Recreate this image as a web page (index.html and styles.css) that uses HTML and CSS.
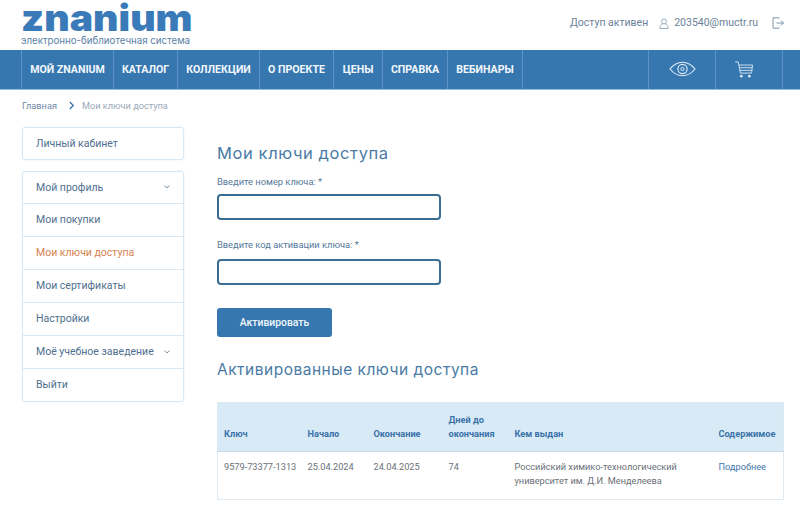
FILE: index.html
```html
<!DOCTYPE html>
<html lang="ru">
<head>
<meta charset="utf-8">
<title>Мои ключи доступа</title>
<link rel="stylesheet" href="styles.css">
</head>
<body>
<header class="top">
  <div class="logo">
    <div class="logo-word">znanium</div>
    <div class="logo-sub">электронно-библиотечная система</div>
  </div>
  <div class="user">
    <span>Доступ активен</span>
    <span class="user-mail">
      <svg class="ico-user" viewBox="0 0 12 13" width="10" height="11"><circle cx="6" cy="4" r="3" fill="none" stroke="#8aa0b8"/><path d="M1 12.5c0-4 2-5.500 3.500-5.500M11 12.500c0-4-2-5.500-3.500-5.500M1 12.500h10" fill="none" stroke="#8aa0b8"/></svg>
      203540@muctr.ru
    </span>
    <svg class="ico-exit" viewBox="0 0 12 12" width="12" height="12"><path d="M7 1.500V.8H1v10.400h6v-.7M4.500 6h7M9 3.500 11.500 6 9 8.500" fill="none" stroke="#8094ac"/></svg>
  </div>
</header>
<nav class="nav">
  <a class="nav-item w1">МОЙ ZNANIUM</a>
  <a class="nav-item w2">КАТАЛОГ</a>
  <a class="nav-item w3">КОЛЛЕКЦИИ</a>
  <a class="nav-item w4">О ПРОЕКТЕ</a>
  <a class="nav-item w5">ЦЕНЫ</a>
  <a class="nav-item w6">СПРАВКА</a>
  <a class="nav-item w7">ВЕБИНАРЫ</a>
  <span class="nav-fill"></span>
  <a class="nav-item w8">
    <svg viewBox="0 0 28 16" width="27" height="16"><path d="M1 8C5 3 9 1 14 1s9 2 13 7c-4 5-8 7-13 7S5 13 1 8Z" fill="none" stroke="#dcebf7" stroke-width="1.200"/><circle cx="14" cy="8" r="4.800" fill="none" stroke="#dcebf7" stroke-width="1.200"/><circle cx="14" cy="8" r="1.700" fill="none" stroke="#dcebf7"/></svg>
  </a>
  <a class="nav-item w9">
    <svg viewBox="0 0 22 19" width="20" height="17"><path d="M1 1h3.500l2.500 12.500h12M5.500 4.500H20.500M6 7.500h14M6.500 10.500h13M20.500 4.500l-1 9" fill="none" stroke="#dcebf7"/><circle cx="8" cy="17" r="1.500" fill="#dcebf7"/><circle cx="17" cy="17" r="1.500" fill="#dcebf7"/></svg>
  </a>
</nav>
<div class="crumbs">
  <span>Главная</span>
  <svg class="crumb-sep" viewBox="0 0 7 10" width="6" height="9"><path d="M1 1l4 4-4 4" fill="none" stroke="#3a72a8" stroke-width="1.500"/></svg>
  <span class="crumb-now">Мои ключи доступа</span>
</div>
<div class="page">
  <aside class="side">
    <ul class="card">
      <li class="item">Личный кабинет</li>
    </ul>
    <ul class="card">
      <li class="item">Мой профиль<svg class="chev" viewBox="0 0 7 4" width="6" height="4"><path d="M.5.500l3 2.500 3-2.500" fill="none" stroke="#5f7f9f"/></svg></li>
      <li class="item">Мои покупки</li>
      <li class="item active">Мои ключи доступа</li>
      <li class="item">Мои сертификаты</li>
      <li class="item">Настройки</li>
      <li class="item">Моё учебное заведение<svg class="chev" viewBox="0 0 7 4" width="6" height="4"><path d="M.5.500l3 2.500 3-2.500" fill="none" stroke="#5f7f9f"/></svg></li>
      <li class="item">Выйти</li>
    </ul>
  </aside>
  <main class="main">
    <h1 class="title">Мои ключи доступа</h1>
    <label class="label">Введите номер ключа: *</label>
    <input class="field" type="text">
    <label class="label label-2">Введите код активации ключа: *</label>
    <input class="field" type="text">
    <button class="btn" type="button">Активировать</button>
    <h2 class="title title-2">Активированные ключи доступа</h2>
    <table class="keys">
      <colgroup>
        <col class="c1"><col class="c2"><col class="c3"><col class="c4"><col class="c5"><col class="c6">
      </colgroup>
      <thead>
        <tr><th>Ключ</th><th>Начало</th><th>Окончание</th><th>Дней до окончания</th><th>Кем выдан</th><th>Содержимое</th></tr>
      </thead>
      <tbody>
        <tr><td>9579-73377-1313</td><td>25.04.2024</td><td>24.04.2025</td><td>74</td><td>Российский химико-технологический университет им. Д.И. Менделеева</td><td><a class="more">Подробнее</a></td></tr>
      </tbody>
    </table>
  </main>
</div>
</body>
</html>
```
FILE: styles.css
```css
* { box-sizing: border-box; }
html, body { margin: 0; height: 505px; overflow: hidden; }
body { background: #fff; font-family: Roboto, "Liberation Sans", sans-serif; color: #4f6f8f; }

.top { height: 50px; padding: 0 16px 0 21px; display: flex; justify-content: space-between; align-items: flex-start; }
.logo { width: 175px; }
.logo-word { font-family: Inter, sans-serif; font-weight: 900; font-size: 36px; line-height: 35px; color: #3a7ab8; height: 35px; margin-top: 1px; transform: scaleX(1.09); transform-origin: left center; white-space: nowrap; }
.logo-sub { font-family: Inter, sans-serif; font-size: 9.700px; line-height: 9px; color: #5a82a6; white-space: nowrap; }
.user { display: flex; align-items: center; font-size: 10.500px; color: #6b8199; margin-top: 16px; line-height: 14px; }
.user-mail { display: flex; align-items: center; gap: 5px; margin-left: 11px; }
.ico-exit { margin-left: 14px; }

.nav { height: 40px; background: #3777b0; border-bottom: 1px solid #8fbbe0; padding-left: 21px; display: flex; }
.nav-item { display: flex; align-items: center; justify-content: center; border-left: 1px solid #5c93c4; color: #f2f7fb; font-weight: 700; font-size: 10.600px; white-space: nowrap; }
.w1 { width: 92px; } .w2 { width: 64px; } .w3 { width: 82px; } .w4 { width: 74px; }
.w5 { width: 49px; } .w6 { width: 65px; } .w7 { width: 75px; }
.nav-fill { width: 126px; border-left: 1px solid #5c93c4; }
.w8 { width: 67px; } .w9 { width: 68px; border-right: 1px solid #5c93c4; padding-right: 11px; }
.w8 svg { margin-top: -1px; }

.crumbs { height: 31px; padding: 0 0 1px 22px; display: flex; align-items: center; font-size: 9.200px; color: #6f8aa5; }
.crumb-sep { margin: 0 7px 0 12px; }
.crumb-now { color: #9aa9b8; }

.page { display: flex; padding-left: 22px; }
.side { width: 162px; margin-top: 6px; display: flex; flex-direction: column; gap: 11px; }
.card { list-style: none; margin: 0; padding: 0; border: 1px solid #d9e8f3; border-radius: 3px; box-shadow: 0 0 2px #e4eef6; }
.item { height: 33px; padding: 0 13px 1px; display: flex; align-items: center; justify-content: space-between; font-size: 10.500px; color: #4f6f8f; border-top: 1px solid #d9e8f3; white-space: nowrap; }
.item:first-child { border-top: 0; height: 31px; }
.active { color: #d6824f; }

.main { width: 567px; margin-left: 33px; display: flex; flex-direction: column; align-items: flex-start; }
.title { margin: 0; font-family: Inter, sans-serif; font-weight: 400; font-size: 16.500px; line-height: 22px; letter-spacing: .6px; color: #4a7ba6; }
.main > .title:first-child { margin-top: 21px; }
.label { display: block; margin-top: 12px; font-size: 9.300px; line-height: 12px; color: #55789a; }
.label-2 { margin-top: 19px; }
.field { display: block; width: 224px; height: 26px; margin-top: 6px; border: 2px solid #3a6d94; border-radius: 4px; background: #fff; padding: 0; }
.label-2 + .field { margin-top: 8px; }
.btn { width: 115px; height: 29px; margin-top: 23px; border: 0; border-radius: 3px; background: #3777b0; color: #f2f7fb; font: 500 10.400px Roboto, sans-serif; padding: 0 0 1px; }
.title-2 { margin-top: 22px; font-size: 15.500px; letter-spacing: .5px; }

.keys { width: 566px; margin-top: 21px; border-collapse: collapse; table-layout: fixed; border: 1px solid #dfe9f1; font-size: 9.200px; }
.c1 { width: 84px; } .c2 { width: 66px; } .c3 { width: 75px; } .c4 { width: 66px; } .c5 { width: 204px; } .c6 { width: 71px; }
.keys th { height: 49px; padding: 0 6px 10px; line-height: 14px; background: #d9eaf7; color: #3a72a8; font-weight: 700; text-align: left; vertical-align: bottom; border-bottom: 1px solid #c8dcec; }
.keys td { height: 48px; padding: 8px 6px 0; line-height: 14px; color: #6a7077; vertical-align: top; }
.keys td:nth-child(-n+4) { white-space: nowrap; }
.keys .more { color: #3f78ad; }
```
